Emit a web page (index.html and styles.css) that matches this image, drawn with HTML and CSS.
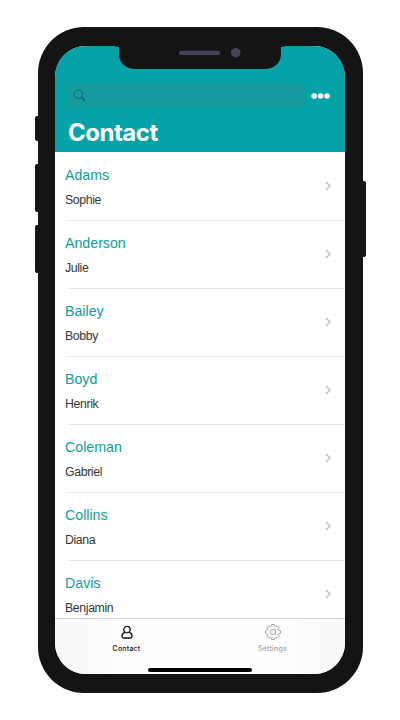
FILE: index.html
```html
<!DOCTYPE html>
<html lang="en">
<head>
<meta charset="utf-8">
<title>Contact</title>
<link rel="stylesheet" href="styles.css">
</head>
<body>
<div class="phone">
  <i class="key mute"></i><i class="key up"></i><i class="key down"></i><i class="key power"></i>
  <svg class="notch" viewBox="0 0 170 26"><path d="M0 0H170V1.5H168C165 1.5 166 4 166 9C166 18 159 24 149 24H21C11 24 4 18 4 9C4 4 5 1.5 2 1.5H0Z" fill="#141414"/><rect x="64" y="5.7" width="41" height="4.4" rx="2.2" fill="#454459"/><circle cx="120.7" cy="7.7" r="4.8" fill="#454459"/></svg>
  <main class="screen">
    <header class="top">
      <div class="tools">
        <div class="search"><svg width="14" height="14" viewBox="0 0 14 14" fill="none" stroke="#16676a"><circle cx="5.4" cy="5.3" r="4.3"/><path d="M8.6 8.5L12.1 12" stroke-width="1.3"/></svg></div>
        <svg class="more" width="20" height="6" viewBox="0 0 20 6" fill="#fff"><circle cx="3.1" cy="3" r="2.8"/><circle cx="9.6" cy="3" r="2.8"/><circle cx="16.1" cy="3" r="2.8"/></svg>
      </div>
      <h1>Contact</h1>
    </header>
    <div class="list">
      <div class="row"><div><h2>Adams</h2><p>Sophie</p></div><svg class="chev" viewBox="0 0 6 10"><path d="M1 1L5 5L1 9"/></svg></div>
      <div class="row"><div><h2>Anderson</h2><p>Julie</p></div><svg class="chev" viewBox="0 0 6 10"><path d="M1 1L5 5L1 9"/></svg></div>
      <div class="row"><div><h2>Bailey</h2><p>Bobby</p></div><svg class="chev" viewBox="0 0 6 10"><path d="M1 1L5 5L1 9"/></svg></div>
      <div class="row"><div><h2>Boyd</h2><p>Henrik</p></div><svg class="chev" viewBox="0 0 6 10"><path d="M1 1L5 5L1 9"/></svg></div>
      <div class="row"><div><h2>Coleman</h2><p>Gabriel</p></div><svg class="chev" viewBox="0 0 6 10"><path d="M1 1L5 5L1 9"/></svg></div>
      <div class="row"><div><h2>Collins</h2><p>Diana</p></div><svg class="chev" viewBox="0 0 6 10"><path d="M1 1L5 5L1 9"/></svg></div>
      <div class="row"><div><h2>Davis</h2><p>Benjamin</p></div><svg class="chev" viewBox="0 0 6 10"><path d="M1 1L5 5L1 9"/></svg></div>
    </div>
    <nav class="tabs">
      <div class="tab active"><svg width="18" height="18" viewBox="-9 -9 18 18"><circle cx="0" cy="-2.4" r="3.2"/><path d="M-2.3 .3C-4.2 .9 -5 2.2 -5 4.1C-5 5.4 -4.6 6 -3.5 6H3.5C4.6 6 5 5.4 5 4.1C5 2.2 4.2 .9 2.3 .3"/></svg><span>Contact</span></div>
      <div class="tab"><svg width="18" height="18" viewBox="-9 -9 18 18"><path d="M7.5 -1.2V1.2L5.7 1.85L5.35 2.72L6.15 4.47L4.47 6.15L2.72 5.35L1.85 5.7L1.2 7.5H-1.2L-1.85 5.7L-2.72 5.35L-4.47 6.15L-6.15 4.47L-5.35 2.72L-5.7 1.85L-7.5 1.2V-1.2L-5.7 -1.85L-5.35 -2.72L-6.15 -4.47L-4.47 -6.15L-2.72 -5.35L-1.85 -5.7L-1.2 -7.5H1.2L1.85 -5.7L2.72 -5.35L4.47 -6.15L6.15 -4.47L5.35 -2.72L5.7 -1.85Z"/><circle r="2.8"/></svg><span>Settings</span></div>
      <i class="home"></i>
    </nav>
  </main>
</div>
</body>
</html>
```
FILE: styles.css
```css
* { box-sizing: border-box; margin: 0; padding: 0; }
body { width: 400px; height: 720px; overflow: hidden; background: #fff; font-family: "Liberation Sans", Arial, sans-serif; }
.phone { position: relative; width: 325px; height: 666.5px; margin: 26.5px 0 0 37.5px; padding: 19px 17.5px; background: #141414; border-radius: 46px; }
.screen { width: 290px; height: 628.5px; border-radius: 31px; overflow: hidden; background: #fff; display: flex; flex-direction: column; }
.key { position: absolute; width: 6px; background: #141414; border-radius: 2px; }
.mute { left: -3px; top: 89.5px; height: 25px; }
.up { left: -3px; top: 137.5px; height: 48px; }
.down { left: -3px; top: 198px; height: 48px; }
.power { right: -3px; top: 154px; height: 76px; }
.notch { position: absolute; left: 77.5px; top: 18px; width: 170px; height: 26px; }
.top { flex: none; height: 106.5px; padding: 37.5px 14px 0 13px; background: #07a2a7; color: #fff; }
.tools { display: flex; align-items: center; justify-content: space-between; }
.search { width: 236px; height: 25px; padding: 6px 0 0 5px; border-radius: 3px; background: #149b9f; }
.search svg, .more { display: block; }
h1 { margin-top: 9px; font: 700 24px/32px Inter, sans-serif; letter-spacing: -.5px; }
.list { flex: 1; min-height: 0; padding-top: 1px; overflow: hidden; }
.row { display: flex; align-items: center; justify-content: space-between; height: 68px; padding: 0 14px 0 10px; background: linear-gradient(#e6e6e8, #e6e6e8) 13px 100% / 100% 1px no-repeat; }
h2 { font-weight: 400; font-size: 14.2px; line-height: 20px; color: #0b9f99; }
.row p { margin-top: 6px; font-size: 12.3px; line-height: 18px; letter-spacing: -.37px; color: #363636; }
.chev { width: 6px; height: 10px; margin-bottom: 2px; fill: none; stroke: #bcbcc0; stroke-width: 1.4; }
.tabs { position: relative; flex: none; display: flex; height: 56px; border-top: 1px solid #d5d6d7; background: linear-gradient(90deg, #f7f8f9, #fefefe 28%, #fefefe 75%, #f7f8fa); }
.tab { flex: none; display: flex; flex-direction: column; align-items: center; width: 149px; padding-top: 4px; color: #a5a5a5; font: 500 7px/9px Inter, sans-serif; letter-spacing: .2px; }
.tab:first-child { width: 143px; }
.tab span { margin-top: 3px; }
.tab svg { fill: none; stroke: currentColor; stroke-width: 1; stroke-linejoin: round; }
.active { color: #111; }
.active svg { stroke-width: 1.3; }
.home { position: absolute; left: 93px; bottom: 2.5px; width: 104px; height: 4px; border-radius: 2px; background: #000; }
```
